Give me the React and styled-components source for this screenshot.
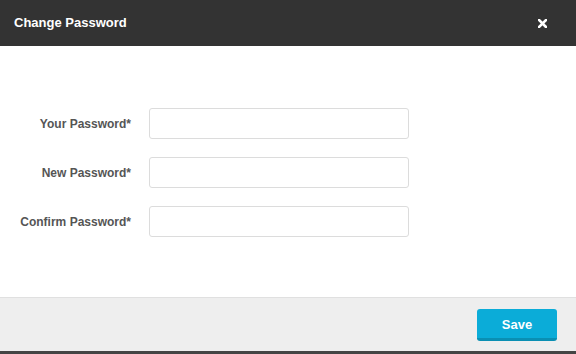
import React from "react";
import styled, { createGlobalStyle } from "styled-components";

const Global = createGlobalStyle`
  html, body { margin: 0; padding: 0; background: #444; }
  body { font-family: "Liberation Sans", Arial, sans-serif; }
  * { box-sizing: border-box; }
`;

const Modal = styled.div`
  width: 576px;
  height: 351px;
  display: flex;
  flex-direction: column;
  background: #fff;
`;

const Header = styled.div`
  height: 46px;
  background: #333333;
  display: flex;
  align-items: center;
  justify-content: space-between;
  padding: 0 29px 0 14px;
`;

const Title = styled.h1`
  margin: 0;
  color: #fff;
  font-size: 13px;
  font-weight: bold;
  line-height: 16px;
  padding-top: 0;
`;

const Close = styled.button`
  border: 0;
  background: none;
  padding: 0;
  width: 9px;
  height: 9px;
  display: flex;
  cursor: pointer;
`;

const Body = styled.div`
  flex: 1;
  padding: 62px 0 0 0;
  background: #fff;
`;

const Form = styled.div`
  display: grid;
  grid-template-columns: 131px 260px;
  column-gap: 18px;
  row-gap: 18px;
  align-items: center;
`;

const Label = styled.label`
  text-align: right;
  font-size: 12px;
  font-weight: bold;
  color: #555;
`;

const Input = styled.input`
  height: 31px;
  width: 260px;
  border: 1px solid #dcdcdc;
  border-radius: 3px;
  background: #fff;
  outline: none;
  font-family: inherit;
  font-size: 12px;
  padding: 0 8px;
`;

const Footer = styled.div`
  height: 54px;
  border-top: 1px solid #e0e0e0;
  background: #eeeeee;
  display: flex;
  justify-content: flex-end;
  align-items: flex-start;
  padding: 11px 19px 0 0;
`;

const SaveButton = styled.button`
  width: 80px;
  height: 32px;
  border: 0;
  border-bottom: 3px solid #0a8fb3;
  border-radius: 3px;
  background: #0bacd8;
  color: #fff;
  font-family: inherit;
  font-size: 13px;
  font-weight: bold;
  padding: 2px 0 0 0;
  cursor: pointer;
`;

const fields = ["Your Password*", "New Password*", "Confirm Password*"];

export default function App() {
  return (
    <>
      <Global />
      <Modal>
        <Header>
          <Title>Change Password</Title>
          <Close aria-label="Close">
            <svg width="9" height="9" viewBox="0 0 9 9">
              <path d="M1 1 L8 8 M8 1 L1 8" stroke="#fff" strokeWidth="2.6" strokeLinecap="square" />
            </svg>
          </Close>
        </Header>
        <Body>
          <Form>
            {fields.map((f) => (
              <React.Fragment key={f}>
                <Label>{f}</Label>
                <Input type="password" />
              </React.Fragment>
            ))}
          </Form>
        </Body>
        <Footer>
          <SaveButton>Save</SaveButton>
        </Footer>
      </Modal>
    </>
  );
}
